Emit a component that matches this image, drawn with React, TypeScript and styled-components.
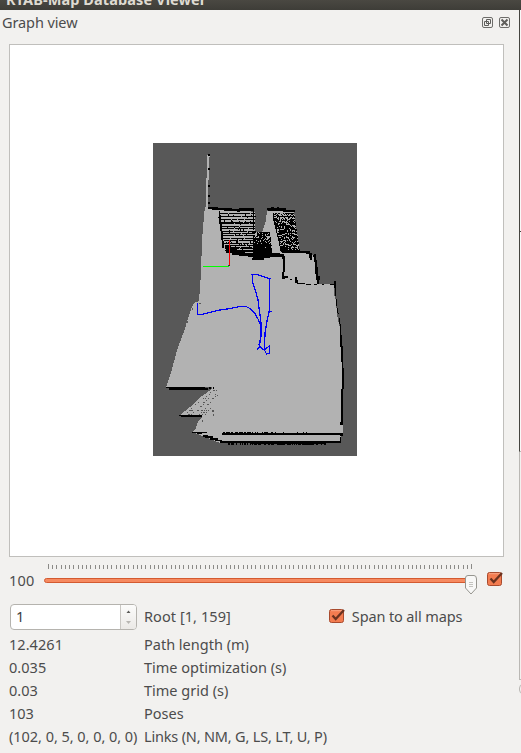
import React from "react";
import styled, { createGlobalStyle } from "styled-components";

const GlobalStyle = createGlobalStyle`
  * { box-sizing: border-box; }
  body {
    margin: 0;
    background: #f2f1ef;
    color: #4c4c4c;
    font: 14.5px/23px "Noto Sans", "Open Sans", sans-serif;
    overflow: hidden;
  }
`;

const Window = styled.div`
  width: 521px;
  height: 753px;
  overflow: hidden;
  display: flex;
  flex-direction: column;
`;

const TitleBar = styled.header`
  height: 10px;
  flex: none;
  padding-left: 6px;
  overflow: hidden;
  display: flex;
  align-items: flex-end;
  background: linear-gradient(#4a4842, #3e3d38);
  color: #dfdbd2;
  font-weight: 700;
`;

const TitleText = styled.span`
  white-space: nowrap;
  line-height: 20px;
  letter-spacing: 0.1px;
  margin-bottom: 1px;
`;

const Body = styled.div`
  display: flex;
  flex: 1;
  min-height: 0;
`;

const Dock = styled.main`
  width: 519px;
  flex: none;
`;

const DockHeader = styled.div`
  height: 34px;
  padding: 1px 9px 0 2px;
  display: flex;
  justify-content: space-between;
`;

const DockButtons = styled.div`
  display: flex;
  gap: 6px;
  padding-top: 6px;
  svg { display: block; }
`;

const Label = styled.span<{ $spacing?: number }>`
  margin: 0;
  white-space: nowrap;
  letter-spacing: ${(p) => p.$spacing ?? 0}px;
`;

const GraphFrame = styled.section`
  width: 495px;
  height: 513px;
  margin-left: 9px;
  padding: 98px 0 0 143px;
  border: 1px solid #c0bfbc;
  background: #fff;
  svg { display: block; }
`;

const SliderRow = styled.div`
  height: 44px;
  padding: 6px 0 0 9px;
  display: flex;
`;

const SliderValue = styled.span`
  width: 35px;
  padding-top: 6px;
  letter-spacing: 0.2px;
`;

const CheckSlot = styled.span`
  margin-left: 8px;
  padding-top: 8px;
`;

const RootRow = styled.div`
  display: flex;
  align-items: center;
  height: 32px;
  padding: 0 0 1px 9px;
`;

const SpinBox = styled.div`
  width: 127px;
  height: 26px;
  display: flex;
  border: 1px solid #b5b3ae;
  border-radius: 4px;
  background: #fff;
  overflow: hidden;
  color: #3c3c3c;
  margin: 0 7px 0 1px;
`;

const SpinValue = styled.span`
  flex: 1;
  padding-left: 5px;
  line-height: 23px;
`;

const SpinArrows = styled.span`
  width: 16px;
  border-left: 1px solid #c9c7c3;
  background: linear-gradient(#fcfcfb, #ebe9e6);
  svg { display: block; }
`;

const SpanOption = styled.label`
  display: flex;
  align-items: center;
  gap: 6px;
  margin-left: 98px;
  padding-bottom: 1px;
`;

const Stats = styled.dl`
  margin: 0;
  padding-left: 9px;
  display: grid;
  grid-template-columns: 135px 1fr;
  grid-auto-rows: 23px;
`;

const Edge = styled.aside`
  width: 2px;
  display: flex;
  flex-direction: column;
`;

const EdgePart = styled.div<{ $height: number; $line: string; $end?: string; $fill?: string }>`
  height: ${(p) => p.$height}px;
  border-left: 1px solid ${(p) => p.$line};
  border-bottom: 1px solid ${(p) => p.$end ?? p.$line};
  background: ${(p) => p.$fill ?? "#f9f9f8"};
`;

const EdgeKnob = styled.div`
  width: 8px;
  height: 10px;
  margin-top: 4px;
  border: 1px solid #bab8b4;
  border-radius: 5px;
`;

/* Small deterministic generator for the scan texture. */
function makeRandom(seed: number) {
  let s = seed;
  return () => {
    s = (s * 1664525 + 1013904223) >>> 0;
    return s / 4294967296;
  };
}

const px = (x: number, y: number, w = 1, h = 1) => `M${x} ${y}h${w}v${h}h${-w}z`;

function shelfStripes() {
  const r = makeRandom(7);
  let d = "";
  const rows = [213, 216, 219, 222, 223, 226, 228, 231, 233, 235, 238, 240, 243, 245, 247, 248, 250, 251];
  rows.forEach((y) => {
    let x = 219 + Math.round((y - 212) * 0.17);
    while (x < 254) {
      const w = 5 + Math.floor(r() * 18);
      d += px(x, y, Math.min(w, 255 - x));
      x += w + 1;
    }
  });
  for (let i = 0; i < 50; i++) {
    const y = 214 + Math.floor(r() * 37);
    d += px(224 + Math.floor(r() * 31), y, 1, 2);
  }
  return d;
}

type Bound = (y: number) => number;

/* Horizontal black runs separated by one-pixel holes, in rows of varying density. */
function brokenRows(seed: number, y0: number, y1: number, left: Bound, right: Bound, density: Bound) {
  const r = makeRandom(seed);
  let d = "";
  for (let y = y0; y < y1; y++) {
    const fill = density(y);
    let x = Math.round(left(y));
    const end = Math.round(right(y));
    while (x < end) {
      const w = Math.min(1 + Math.floor(r() * 4), end - x);
      if (r() < fill) d += px(x, y, w);
      else d += px(x, y);
      x += w + (r() < 0.4 ? 1 : 0);
    }
  }
  return d;
}

function teeth(seed: number, x0: number, x1: number, y: number, density: number, h = 1) {
  const r = makeRandom(seed);
  let d = "";
  for (let x = x0; x < x1; x++) if (r() < density) d += px(x, y, 1, h);
  return d;
}

function speckles() {
  const r = makeRandom(31);
  let d = "";
  for (let y = 390; y < 415; y += 2) {
    const left = 213 - (y - 389) * 1.18;
    const right = 218 - (y - 389) * 0.42;
    for (let x = Math.round(left); x < right; x += 2) if (r() < 0.34) d += px(x + (r() < 0.5 ? 1 : 0), y, r() < 0.25 ? 2 : 1);
  }
  return d + px(212, 410, 2, 2) + px(213, 414, 1, 2) + px(202, 420, 1, 2) + px(217, 395);
}

const FREE =
  "M207 155H210V157H209V180H208V208H219L255 212V232H262L264 227L266 220L267 211H274L294 212L300 252L310 254L314 256L318 284H334V295L336 300L337 315L340 328L341 335L342 368L343 398V435H341V443H220L205 437L195 433L193 432L196 428L198 422L202 417V415H180L190 407L202 396L212 389V387H166L170 376L178 347L185 329L188 318L192 307L194 303L199 301L201 273L202 240L203 229L204 215L205 207H206V178H207Z";

const WALLS =
  "M208 154h2v2h-2zM208 168h2v2h-2zM208 185h2v2h-2zM208 195h2v2h-2zM208 202h2v2h-2z" +
  "M208 207H218V208H232V209H239V208H254V211H240V212H237V211H224V210H212V209H208z" +
  "M219 211h1v4h1v7h1v9h1v10h1v7h-2v-8h-1v-9h-1v-7h-1v-6h-1v-1h1z" +
  "M226 246h5v3h6v1h8v3h9v4h-6v-1h-9v-1h-7v-2h-6z" +
  "M253 211h1v19h-1zM252 216h4v1h-4zM252 222h3v1h-3zM252 231h4v2h-4z" +
  "M254 252h15v1h11v1h4v3h-14v1h-6v2h-12z" +
  "M267 208h4v-1h3v1h3v-1h2v1h7v2h9v2h-12v-1h-15z" +
  "M280 250h20v1h10v2h2v3h-2v-2h-4v-1h-24z" +
  "M309 254h3v6h-2v-2h-1zM314 254h2v6h1v7h1v9h2v4h-1v4h-2v-4h-1v-6h-1v-12h-1v-5h-1z" +
  "M282 256h3v16h-1v4h4v2h-3v1h-3v-7h1v-13h-1zM290 279h2v1h-2z" +
  "M295 277h2v3h1v3h7v1h-8v-1h-2zM306 284h5v1h-5zM314 284h3v1h-3zM322 284h2v1h-2zM330 284h4v1h-4zM334 281h2v11h-1v-4h-1z" +
  "M335 292h1v14h1v7h2v5h1v6h1v11h1v11h1v22h1v21h-1v36h-3v-3h1v-33h1v-27h-1v-15h-1v-23h-1v-10h-1v-6h-1v-9h-1z" +
  "M166 387H205V388H208V390H169V388H166zM209 387h2v2h-2zM213 387h1v2h-1z" +
  "M179 415H202V417H181V416H179zM192 432H207V433H202V434H197V433H192z" +
  "M203 435h5v1h5v2h5v2h4v1h-7v-1h-5v-2h-5v-1h-2z" +
  "M222 433H343V436H340V435H222zM220 441H340V437H341V443H326V444H250V443H220z";

const STRIPES = shelfStripes();
const NOISE =
  brokenRows(12, 232, 253, (y) => 253 + (y < 236 ? 4 : 0), (y) => 270 + (y - 232) * 0.12, () => 0.82) +
  brokenRows(18, 213, 252, (y) => 273 + Math.max(0, y - 218) * 0.24, (y) => 294 + (y - 212) * 0.15, (y) => (y < 220 ? (y % 3 ? 0.05 : 0.9) : 0.72)) +
  brokenRows(5, 244, 253, () => 253, () => 271, () => 0.9);
const FLOOR = teeth(3, 253, 300, 433, 0.55, 2) + teeth(9, 223, 252, 432, 0.7) + teeth(22, 228, 326, 443, 0.7, 2) + teeth(14, 252, 310, 432, 0.3);
const FRINGE =
  "M199 303h2v1h-2zM206 168h1v3h-1zM205 200h1v2h-1zM170 372h1v2h-1zM187 321h1v2h-1zM192 308h1v2h-1zM320 283h2v1h-2zM326 283h2v1h-2zM331 283h1v1h-1z";
const SPECKLES = speckles() + FRINGE;

function OccupancyMap() {
  return (
    <svg width="204" height="313" viewBox="153 143 204 313" shapeRendering="crispEdges">
      <rect x="153" y="143" width="204" height="313" fill="#585858" />
      <path d={FREE} fill="#b2b2b2" />
      <path d={SPECKLES} fill="#585858" />
      <path d={WALLS + STRIPES + NOISE + FLOOR} fill="#000" />
      <path d="M229.5 240V266" stroke="#f00" fill="none" />
      <path d="M203 266.5H229" stroke="#0f0" fill="none" />
      <path d="M228 265h2v1h-2z" fill="#333" />
      <g fill="none" stroke="#0000f5" strokeWidth="1.25">
        <path d="M197.5 302.5V314.5H202L217 310.5L230 308.5L240 306.5H246L250 308.5L255 313.5L258 319L261 325.5V336L259 345" />
        <path d="M251 274.5H257L263 276.5L269.5 278.5V310L267 321L265 333L264.5 350" />
        <path d="M252.5 275V282L255 289L258 300L260 315L261.5 327L260.5 336L259.5 347L257 350M268 311.5H272M259 346L264 350L269.5 346V353L266.5 354L264 349M268 278.5H271" />
      </g>
    </svg>
  );
}

function CheckBox() {
  return (
    <svg width="17" height="16" viewBox="0 0 17 16" display="block">
      <rect x="0.5" y="1.5" width="14" height="13" rx="2" fill="#f37c50" stroke="#a84b2e" />
      <path d="M2 2.7H13" stroke="#f9a684" />
      <path d="M3.5 7.5L6.7 11L15 2" fill="none" stroke="#6b321f" strokeWidth="2.3" />
    </svg>
  );
}

function Slider() {
  const ticks = Array.from({ length: 101 }, (_, i) => {
    const x = 4 + Math.round(i * 4.23);
    return i === 0 || i === 100 ? `M${x}.5 1V6` : `M${x}.5 2V6`;
  }).join("");
  return (
    <svg width="435" height="34" viewBox="0 0 435 34">
      <path d={ticks} stroke="#8b8a87" shapeRendering="crispEdges" />
      <rect x="0.5" y="15.5" width="426" height="4" rx="2" fill="#f68a60" stroke="#d35a30" />
      <path d="M421.5 15Q421.5 12.5 424 12.5H430Q432.5 12.5 432.5 16V25L427 31L421.5 25Z" fill="#f8f8f7" stroke="#96958f" />
      <path d="M425 19.5H429M425 21.5H429M425 23.5H429" stroke="#c4c3bf" />
    </svg>
  );
}

function DockIcon({ kind }: { kind: "float" | "close" }) {
  return (
    <svg width="11" height="11" viewBox="0 0 11 11">
      <rect x="0.5" y="0.5" width="10" height="10" rx="1.5" fill="none" stroke="#6e6d6a" />
      {kind === "float" ? (
        <path d="M4.5 2.5H8.5V6.5H4.5ZM2.5 4.5H6.5V8.5H2.5Z" fill="#f2f1ef" stroke="#5f5e5b" />
      ) : (
        <path d="M2.5 2.5L8.5 8.5M8.5 2.5L2.5 8.5" stroke="#5f5e5b" strokeWidth="2" />
      )}
    </svg>
  );
}

const STATS: [string, string, number, number][] = [
  ["12.4261", "Path length (m)", 0.05, 0],
  ["0.035", "Time optimization (s)", 0.05, 0],
  ["0.03", "Time grid (s)", 0, 0],
  ["103", "Poses", 0, 0],
  ["(102, 0, 5, 0, 0, 0, 0)", "Links (N, NM, G, LS, LT, U, P)", -0.04, -0.18],
];

export default function App() {
  return (
    <>
      <GlobalStyle />
      <Window>
        <TitleBar>
          <TitleText>RTAB-Map Database Viewer</TitleText>
        </TitleBar>
        <Body>
          <Dock>
            <DockHeader>
              <Label $spacing={-0.1}>Graph view</Label>
              <DockButtons>
                <DockIcon kind="float" />
                <DockIcon kind="close" />
              </DockButtons>
            </DockHeader>
            <GraphFrame>
              <OccupancyMap />
            </GraphFrame>
            <SliderRow>
              <SliderValue>100</SliderValue>
              <Slider />
              <CheckSlot>
                <CheckBox />
              </CheckSlot>
            </SliderRow>
            <RootRow>
              <SpinBox>
                <SpinValue>1</SpinValue>
                <SpinArrows>
                  <svg width="15" height="24" viewBox="0 0 15 24">
                    <path d="M5.5 8L7.5 5.5L9.5 8Z" fill="#5a5956" />
                    <path d="M5 16L7.5 19L10 16Z" fill="#b7b5b1" />
                  </svg>
                </SpinArrows>
              </SpinBox>
              <Label $spacing={0.07}>Root [1, 159]</Label>
              <SpanOption>
                <CheckBox />
                <Label $spacing={-0.13}>Span to all maps</Label>
              </SpanOption>
            </RootRow>
            <Stats>
              {STATS.map(([value, name, valueSpacing, nameSpacing]) => (
                <React.Fragment key={name}>
                  <Label $spacing={valueSpacing}>{value}</Label>
                  <Label $spacing={nameSpacing}>{name}</Label>
                </React.Fragment>
              ))}
            </Stats>
          </Dock>
          <Edge>
            <EdgePart $height={222} $line="#45443f" />
            <EdgePart $height={220} $line="#45443f" $end="#bab8b4" />
            <EdgePart $height={228} $line="#bab8b4" $fill="#f2f1ef" />
            <EdgeKnob />
          </Edge>
        </Body>
      </Window>
    </>
  );
}
